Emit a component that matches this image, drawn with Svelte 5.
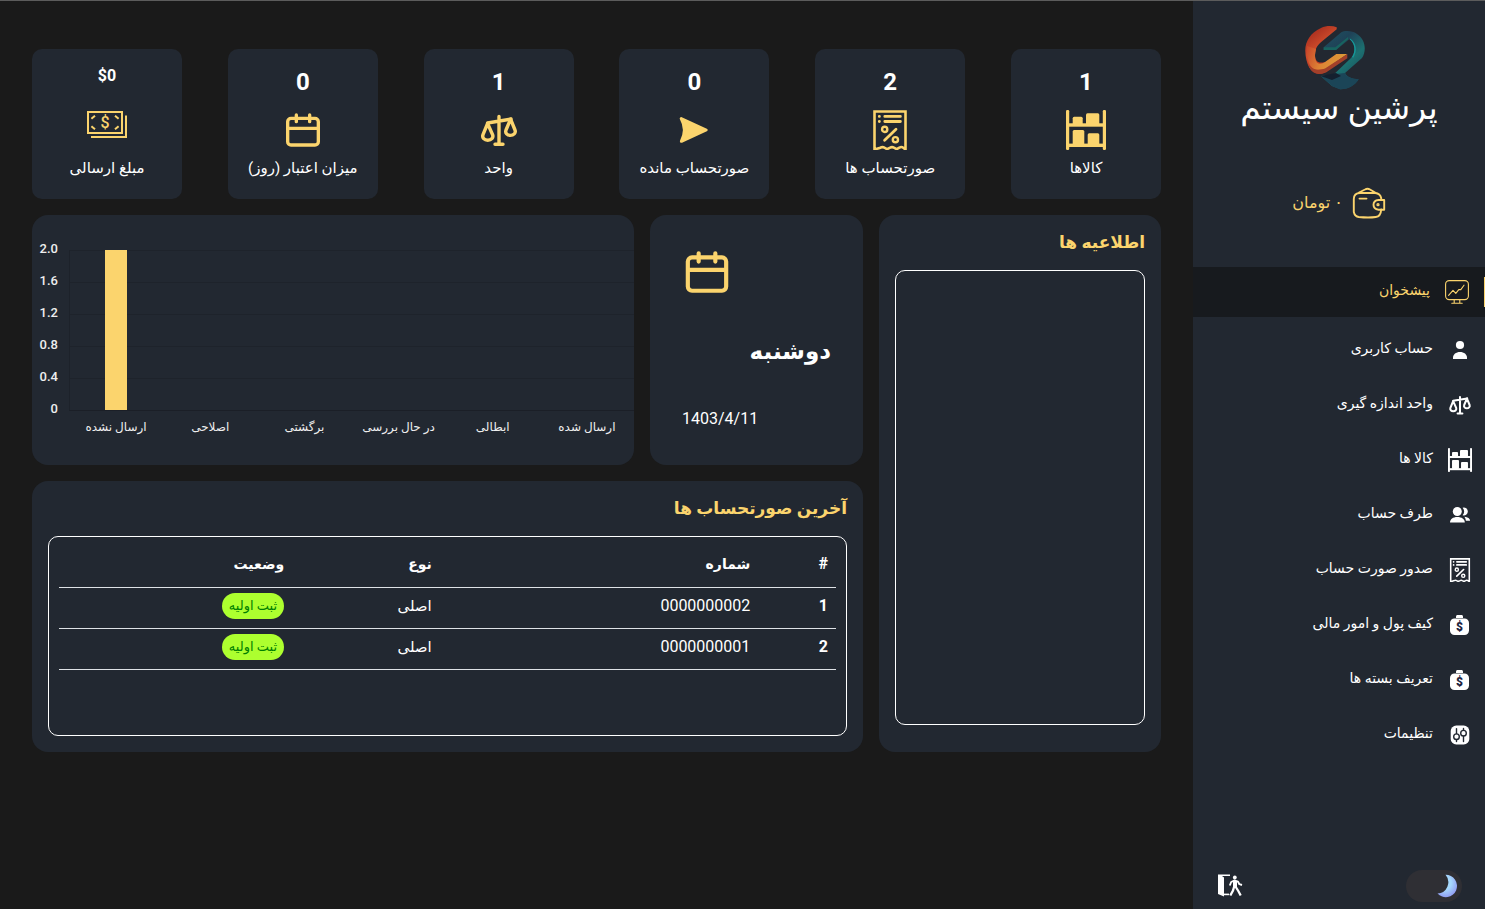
<script>
  const stats = [
    { value: '1', label: 'کالاها', icon: 'shelf' },
    { value: '2', label: 'صورتحساب ها', icon: 'receipt' },
    { value: '0', label: 'صورتحساب مانده', icon: 'send' },
    { value: '1', label: 'واحد', icon: 'scale' },
    { value: '0', label: 'میزان اعتبار (روز)', icon: 'calendar' },
    { value: '$0', label: 'مبلغ ارسالی', icon: 'cash', small: true },
  ];
  const links = [
    { label: 'پیشخوان', icon: 'monitor', active: true },
    { label: 'حساب کاربری', icon: 'user' },
    { label: 'واحد اندازه گیری', icon: 'scale' },
    { label: 'کالا ها', icon: 'shelf' },
    { label: 'طرف حساب', icon: 'users' },
    { label: 'صدور صورت حساب', icon: 'receipt' },
    { label: 'کیف پول و امور مالی', icon: 'bag' },
    { label: 'تعریف بسته ها', icon: 'bag' },
    { label: 'تنظیمات', icon: 'settings' },
  ];
  const ticks = ['2.0', '1.6', '1.2', '0.8', '0.4', '0'];
  const bars = [
    { label: 'ارسال نشده', value: 2 },
    { label: 'اصلاحی', value: 0 },
    { label: 'برگشتی', value: 0 },
    { label: 'در حال بررسی', value: 0 },
    { label: 'ابطالی', value: 0 },
    { label: 'ارسال شده', value: 0 },
  ];
  const invoices = [
    { number: '0000000002', type: 'اصلی', status: 'ثبت اولیه' },
    { number: '0000000001', type: 'اصلی', status: 'ثبت اولیه' },
  ];
  let dark = $state(true);
</script>

{#snippet icon(name)}
  {#if name === 'shelf'}
    <svg class="icon" viewBox="0 0 40 40" fill="currentColor" aria-hidden="true">
      <rect x="0" y="0" width="3.2" height="40" rx="1.2" /><rect x="36.8" y="0" width="3.2" height="40" rx="1.2" />
      <rect x="2" y="13.3" width="36" height="3.4" /><rect x="2" y="33.6" width="36" height="3.4" />
      <rect x="6.7" y="6.8" width="10" height="8" rx="1.5" /><rect x="20" y="3.3" width="13.3" height="11.5" rx="1.5" />
      <rect x="6.7" y="20" width="11.6" height="15" rx="1.5" /><rect x="21.7" y="23.3" width="11.6" height="12" rx="1.5" />
    </svg>
  {:else if name === 'receipt'}
    <svg class="icon" viewBox="0 0 40 40" fill="none" stroke="currentColor" stroke-width="2.8" aria-hidden="true">
      <path d="M4.5 39.5V1.5h31v38l-2.2-1.8q-2-1.4-4 0l-2.6 1.4-2.8-1.4q-1.8-1.2-3.8 0L17 39.1l-2.6-1.4q-2-1.2-4 0z" stroke-width="2.6" />
      <path d="M9.3 6.4h.1M9.3 11.5h.1M14.8 6.4h15.6M14.8 11.5h15.6M26 19.2 14.6 30.2" stroke-linecap="round" />
      <circle cx="14.7" cy="19.4" r="2.6" stroke-width="2.4" /><circle cx="25.4" cy="29.7" r="2.6" stroke-width="2.4" />
    </svg>
  {:else if name === 'send'}
    <svg class="icon" viewBox="0 0 40 40" fill="currentColor" stroke="currentColor" stroke-width="3" stroke-linejoin="round" aria-hidden="true">
      <path d="M7.2 8.6 32.2 20 7.4 31.3Q10.2 26 10.400 20 10.200 14 7.2 8.6z" />
    </svg>
  {:else if name === 'scale'}
    <svg class="icon" viewBox="0 0 40 40" fill="none" stroke="currentColor" stroke-width="3.4" stroke-linecap="round" stroke-linejoin="round" aria-hidden="true">
      <path d="M20 6.5v27M16 34.3h8M8.6 13 32 9" />
      <path d="M8.6 13.5 4 24.7c-1.2 3.2 1.4 5.6 4.8 5.6s6-2.4 4.8-5.6z" />
      <path d="M31.6 9.2 27 20c-1.2 3.2 1.4 5.4 4.4 5.4s5.8-2.2 4.6-5.4z" />
    </svg>
  {:else if name === 'calendar'}
    <svg class="icon" viewBox="0 0 24 24" fill="none" stroke="currentColor" stroke-width="2" stroke-linecap="round" aria-hidden="true">
      <rect x="2.8" y="5" width="18.4" height="16" rx="2" /><path d="M3 11h18M8 3v4M16 3v4" />
    </svg>
  {:else if name === 'cash'}
    <svg class="icon" viewBox="0 0 40 40" fill="none" stroke="currentColor" stroke-width="2" aria-hidden="true">
      <path d="M1 8h34v21H1zM39 11.500V33H4M4.4 14.800 8 11.800M28 11.800l3.600 3M4.400 22.200 8 25.200M28 25.200l3.600-3" />
      <text x="18" y="24" text-anchor="middle" font-family="Roboto, sans-serif" font-weight="500" font-size="16" fill="currentColor" stroke="none">$</text>
    </svg>
  {:else if name === 'monitor'}
    <svg class="icon" viewBox="0 0 24 24" fill="none" stroke="currentColor" stroke-width="1.1" stroke-linecap="round" stroke-linejoin="round" aria-hidden="true">
      <rect x=".6" y=".6" width="22.800" height="19" rx="3.600" />
      <path d="M3.600 15.400 8 10.400l2.800 3 3-3.800h2L19 5.200M9.200 19.800v3M14.800 19.800v3M6.800 23.200h10.400" />
    </svg>
  {:else if name === 'user'}
    <svg class="icon" viewBox="0 0 24 24" fill="currentColor" aria-hidden="true">
      <circle cx="12" cy="7" r="4.1" /><path d="M5 21v-1.2C5 16.4 8 14 12 14s7 2.400 7 5.800V21z" />
    </svg>
  {:else if name === 'users'}
    <svg class="icon" viewBox="0 0 24 24" fill="currentColor" aria-hidden="true">
      <circle cx="9.300" cy="8.500" r="4.500" /><path d="M2 19.500c0-3.300 3-5.400 7.300-5.400s7.500 2.100 7.500 5.400z" />
      <path d="M14.600 4.700a4 4 0 1 1 0 7.600 6 6 0 0 0 0-7.600zM16.400 13.700c3.400.3 5.700 1.800 5.700 4.100h-4.200c-.2-1.700-.7-3-1.500-4.100z" />
    </svg>
  {:else if name === 'bag'}
    <svg class="icon" viewBox="0 0 24 24" aria-hidden="true">
      <path d="M8 5V3.600C8 2.600 8.600 2 9.600 2h3.800c1 0 1.600.6 1.600 1.600V5" fill="#fff" />
      <rect x="2" y="5.400" width="19" height="16.600" rx="4.500" fill="#fff" />
      <text x="11.500" y="18" text-anchor="middle" font-family="Roboto, sans-serif" font-weight="900" font-size="12" fill="#1d2440">$</text>
    </svg>
  {:else if name === 'settings'}
    <svg class="icon" viewBox="0 0 24 24" fill="none" stroke="#222831" stroke-width="1.400" stroke-linecap="round" aria-hidden="true">
      <rect x="2.700" y="2.500" width="18.600" height="19" rx="5.600" fill="#fff" stroke="none" />
      <path d="M8.500 5.600v5M8.500 16.800v1.800M15.500 5.400v1.800M15.500 13.200v5.400" /><circle cx="8.500" cy="13.700" r="2.800" /><circle cx="15.500" cy="10.200" r="2.800" />
    </svg>
  {/if}
{/snippet}

<div class="app" dir="rtl">
  <aside>
    <div class="brand">
      <svg width="60" height="64" viewBox="0 0 60 64" aria-hidden="true">
        <defs>
          <linearGradient id="flame" x1="0" y1="0" x2=".5" y2="1"><stop offset="0" stop-color="#96201a" /><stop offset=".5" stop-color="#cc4a2a" /><stop offset="1" stop-color="#b52f20" /></linearGradient>
          <linearGradient id="gold" gradientUnits="userSpaceOnUse" x1="2" y1="20" x2="42" y2="36"><stop offset="0" stop-color="#c8452a" /><stop offset=".45" stop-color="#dd8435" /><stop offset="1" stop-color="#dca038" /></linearGradient>
          <linearGradient id="teal" x1="0" y1="0" x2=".7" y2="1"><stop offset="0" stop-color="#1d5463" /><stop offset=".35" stop-color="#1f4257" /><stop offset=".65" stop-color="#1c7070" /><stop offset="1" stop-color="#194a5a" /></linearGradient>
        </defs>
        <path d="M18.700 21.300 36 6.500C40 4.400 47 4.500 52 8c9 6 9.500 17 5 24L40 47c2 4 7 6 13.700 6.300C50 59 44 63.500 35 63.300L27 60 15.700 50l13-1.500L46 32c5-5 5-15-1.500-19L31 24H18.700z" fill="url(#teal)" />
        <path d="M18.700 21.300h11.600L43 11v2.300L31 24H18.700z" fill="#18635f" />
        <path d="M44.500 13c6 5 6 13 2.500 18l1.200.8c4.500-7 3-15-2.700-19z" fill="#16999a" />
        <path d="M15.700 50 31 48l9-1c2 4 7 6 13.700 6.300C50 59 44 63.500 35 63.300L27 60z" fill="#1b4557" />
        <path d="M15.700 50 31 47l5 3-9 4z" fill="#14202f" />
        <path d="M31.700 1.300C27-.5 21-.3 16 2 5 7 0 16 .3 25 .6 38 6 48 14 48c4 0 7-2 10-5l-4-7c-7 2-10-1-10-7 0-8 4-11 8-14.500L31.700 3.300z" fill="url(#flame)" />
        <path d="M2 20C1 32 4 43 12 44l9-1 21.300-15H31.300l-12 8.500C12 40 10 35 10 29l1-6z" fill="url(#gold)" />
        <path d="M3 38c4 6 11 7 17 4.500L42.300 28v4.300L21 46.500C13 50 6 47 3 38z" fill="#a2402a" />
      </svg>
      <span>پرشین سیستم</span>
    </div>
    <div class="wallet">
      <svg width="34" height="34" viewBox="0 0 34 34" fill="none" stroke="currentColor" stroke-width="1.900" stroke-linecap="round" stroke-linejoin="round" aria-hidden="true">
        <path d="M29.200 14V12q-1-4.500-6-5H8Q2 7 1.800 13v13q1 4.500 5 5 10 1 17 0 5-.5 5.400-7.500" />
        <path d="m7 6.500 6-3q2.500-1.500 5 0l5.500 3.200M7.500 12.600h7" />
        <path d="M32.200 14h-5.700q-5 .4-5 4.800t5 4.900h5.700z" /><circle cx="26" cy="18.700" r=".7" />
      </svg>
      <span>۰ تومان</span>
    </div>
    <nav>
      {#each links as link}
        <a href="#{link.icon}" class:active={link.active}>
          <span class="slot">{@render icon(link.icon)}</span>
          <span class="title">{link.label}</span>
        </a>
      {/each}
    </nav>
    <div class="foot">
      <label class="toggle" aria-label="حالت شب">
        <input type="checkbox" bind:checked={dark} />
        <svg width="24" height="24" viewBox="0 0 24 24" aria-hidden="true">
          <defs><radialGradient id="moon" cx=".4" cy=".35" r=".75"><stop offset=".4" stop-color="#a6d8fc" /><stop offset="1" stop-color="#8c8ff0" /></radialGradient></defs>
          <path d="M11.500.8A11.200 11.200 0 1 1 3.500 19.500 11.300 11.300 0 0 0 11.500.8z" fill="url(#moon)" />
        </svg>
      </label>
      <button aria-label="خروج">
        <svg width="26" height="26" viewBox="0 0 26 26" fill="none" stroke="#fff" aria-hidden="true">
          <path d="M1 1.500h12v1.600H5l2 1.500v19L1 21z" fill="#fff" stroke="none" /><path d="M7 21.400h5" stroke-width="1.600" />
          <circle cx="17.800" cy="4.500" r="1.900" fill="#fff" stroke="none" />
          <path d="M12.800 12.500 14.200 9l3-1.500L21 8.600l1.400 2.600 2.600.8" stroke-width="1.900" stroke-linejoin="round" />
          <path d="M18 8v7" stroke-width="4" /><path d="m17 14-1 3.500-2.700 5M18.800 14l2.500 4 2.400 4.500" stroke-width="2.300" />
        </svg>
      </button>
    </div>
  </aside>

  <main>
    <section class="stats">
      {#each stats as stat}
        <article class="stat">
          <strong class:small={stat.small} dir="ltr">{stat.value}</strong>
          {@render icon(stat.icon)}
          <span>{stat.label}</span>
        </article>
      {/each}
    </section>

    <div class="board">
      <section class="card notices">
        <h2>اطلاعیه ها</h2>
        <div class="frame"></div>
      </section>

      <section class="card date">
        {@render icon('calendar')}
        <strong>دوشنبه</strong>
        <time datetime="1403-04-11" dir="ltr">1403/4/11</time>
      </section>

      <section class="card chart" dir="ltr">
        <div class="ticks">
          {#each ticks as tick}<span>{tick}</span>{/each}
        </div>
        <div class="plot">
          <div class="lines"><i></i><i></i><i></i><i></i><i></i></div>
          <div class="bars">
            {#each bars as bar}
              <div class="column"><div class="bar" style="height: {bar.value * 50}%"></div></div>
            {/each}
          </div>
          <div class="names">
            {#each bars as bar}<span dir="rtl">{bar.label}</span>{/each}
          </div>
        </div>
      </section>

      <section class="card invoices">
        <h2>آخرین صورتحساب ها</h2>
        <div class="frame">
          <table>
            <thead>
              <tr><th class="index">#</th><th class="number">شماره</th><th class="type">نوع</th><th>وضعیت</th></tr>
            </thead>
            <tbody>
              {#each invoices as invoice, i}
                <tr>
                  <th>{i + 1}</th><td>{invoice.number}</td><td class="kind">{invoice.type}</td>
                  <td><span class="badge">{invoice.status}</span></td>
                </tr>
              {/each}
            </tbody>
          </table>
        </div>
      </section>
    </div>
  </main>
</div>

<style>
  :global(body) { background: #1a1a1a; }
  .app, .app * { box-sizing: border-box; }
  .app {
    display: flex;
    min-height: 100vh;
    border-top: 1px solid #5c5c5c;
    color: #fff;
    font: 16px/24px Roboto, "DejaVu Sans", sans-serif;
  }
  .icon { display: block; width: 40px; height: 40px; flex: none; }

  aside {
    flex: 0 0 292px;
    display: flex;
    flex-direction: column;
    padding-top: 25px;
    background: #222831;
  }
  .brand { display: flex; flex-direction: column; align-items: center; }
  .brand svg { margin-right: -8px; margin-left: 0; }
  .brand svg { margin-right: 8px; }
  .brand span { font-size: 33px; line-height: 36px; white-space: nowrap; }
  .wallet {
    display: flex;
    align-items: center;
    justify-content: center;
    gap: 9px;
    height: 40px;
    margin-top: 57px;
    color: #fbd46d;
  }
  nav { display: flex; flex-direction: column; margin-top: 44px; }
  nav a {
    position: relative;
    display: flex;
    align-items: center;
    gap: 15px;
    height: 55px;
    padding-right: 13px;
    color: #fff;
    font-size: 14px;
    text-decoration: none;
  }
  nav a.active { height: 50px; margin-bottom: 5px; padding-right: 16px; background: #171a1e; color: #fbd46d; }
  nav a.active::before {
    content: "";
    position: absolute;
    right: 0;
    top: 10px;
    width: 1px;
    height: 30px;
    background: #fbd46d;
  }
  .slot .icon { width: 24px; height: 24px; }
  .title { padding-bottom: 4px; }
  .foot {
    display: flex;
    align-items: center;
    justify-content: space-between;
    margin-top: auto;
    padding: 0 23px 7px 24px;
  }
  .toggle {
    display: flex;
    align-items: center;
    width: 56px;
    height: 32px;
    padding-right: 4px;
    border-radius: 16px;
    background: #2f2f34;
    cursor: pointer;
  }
  .toggle input { position: absolute; opacity: 0; margin: 0; }
  button { padding: 0; border: 0; background: none; cursor: pointer; }
  button svg { display: block; }

  main { flex: 1; min-width: 0; padding: 48px 32px; }
  .stats { display: flex; justify-content: space-between; }
  .stat {
    display: flex;
    flex-direction: column;
    align-items: center;
    justify-content: space-between;
    width: 150px;
    height: 150px;
    padding: 15px 4px 23px;
    border-radius: 10px;
    background: #222831;
  }
  .stat strong { font-size: 24px; line-height: 36px; }
  .stat strong.small { font-size: 16px; line-height: 24px; }
  .stat span { font-size: 15px; line-height: 16px; white-space: nowrap; }
  .stat .icon, .date .icon { color: #fbd46d; }

  .board {
    display: grid;
    grid-template-columns: 282fr 213fr 602fr;
    grid-template-rows: 250px auto;
    gap: 16px;
    margin-top: 16px;
  }
  .card { border-radius: 16px; background: #222831; min-width: 0; }
  .notices { grid-row: 1 / 3; display: flex; flex-direction: column; padding: 11px 16px 27px; }
  .notices .frame { flex: 1; }
  h2 { margin: 0 0 12px; font-size: 17px; font-weight: 700; line-height: 32px; color: #fbd46d; }
  .frame { border: 1px solid #fff; border-radius: 10px; }

  .date { display: flex; flex-direction: column; justify-content: space-between; padding: 32px 32px 34px; }
  .date .icon { width: 50px; height: 50px; align-self: flex-end; }
  .date strong { font-size: 23px; line-height: 36px; }
  .date time { align-self: flex-end; }

  .chart { display: grid; grid-template-columns: 37px 1fr; align-items: start; padding-top: 18px; font-size: 13px; font-weight: 500; color: #eee; }
  .ticks { display: flex; flex-direction: column; padding-right: 11px; }
  .ticks span { height: 32px; line-height: 32px; text-align: right; }
  .plot { display: grid; grid-template-rows: 161px auto; padding-top: 17px; }
  .lines { grid-area: 1 / 1; border-left: 1px solid #1d222a; border-bottom: 1px solid #1b1f27; }
  .lines i { display: block; height: 32px; border-top: 1px solid #1e232b; }
  .bars { grid-area: 1 / 1; display: grid; grid-template-columns: repeat(6, 1fr); padding-bottom: 1px; }
  .column { display: flex; align-items: flex-end; justify-content: center; }
  .bar { width: 24%; background: #fbd46d; }
  .names { display: grid; grid-template-columns: repeat(6, 1fr); padding-top: 4px; font-size: 12px; text-align: center; white-space: nowrap; }

  .invoices { grid-column: 2 / 4; padding: 11px 16px 16px; }
  .invoices .frame { height: 200px; padding: 9px 10px; }
  table { width: 100%; border-collapse: collapse; table-layout: fixed; }
  th, td { height: 41px; padding: 0 8px 4px; border-bottom: 1px solid #dee2e6; text-align: right; }
  thead th { font-size: 14px; }
  thead .index { font-size: 16px; }
  .kind { font-size: 15px; }
  .index { width: 10%; }
  .number { width: 41%; }
  .type { width: 19%; }
  .badge {
    display: inline-block;
    padding: 0 7px;
    border-radius: 13px;
    background: #adff2f;
    color: #008000;
    font-size: 13px;
    line-height: 26px;
    vertical-align: middle;
  }
</style>
